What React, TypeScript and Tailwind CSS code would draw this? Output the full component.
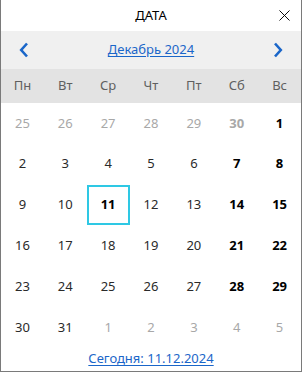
import { X } from "lucide-react";

type Day = { n: number; muted?: boolean; bold?: boolean; today?: boolean };

const weekdays = ["Пн", "Вт", "Ср", "Чт", "Пт", "Сб", "Вс"];

function buildDays(): Day[] {
  const days: Day[] = [];
  [25, 26, 27, 28, 29].forEach((n) => days.push({ n, muted: true }));
  days.push({ n: 30, muted: true, bold: true });
  for (let n = 1; n <= 31; n++) {
    const col = days.length % 7;
    days.push({ n, bold: col >= 5 || n === 11, today: n === 11 });
  }
  [1, 2, 3, 4, 5].forEach((n) => days.push({ n, muted: true }));
  return days;
}

function Chevron({ dir }: { dir: "left" | "right" }) {
  return (
    <svg width="12" height="18" viewBox="0 0 12 18" className="text-[#1a66c9]">
      {dir === "left" ? (
        <path d="M9 2.5 L3.2 9 L9 15.5" fill="none" stroke="currentColor" strokeWidth="2.6" />
      ) : (
        <path d="M3 2.5 L8.8 9 L3 15.5" fill="none" stroke="currentColor" strokeWidth="2.6" />
      )}
    </svg>
  );
}

export default function App() {
  const days = buildDays();
  return (
    <div
      className="flex h-[372px] w-[302px] flex-col border-x border-b border-[#7a7a7a] bg-white text-[13px]"
      style={{ fontFamily: '"Segoe UI", "Noto Sans", sans-serif' }}
    >
      <div className="relative flex h-[31px] shrink-0 items-center justify-center text-[13px] text-black">
        ДАТА
        <button type="button" className="absolute right-[7px] top-[6px] text-black" aria-label="Закрыть">
          <X className="h-[19px] w-[19px]" strokeWidth={1.2} />
        </button>
      </div>
      <div className="flex h-[38px] shrink-0 items-center justify-between bg-[#f0f0f0] px-[17px]">
        <Chevron dir="left" />
        <span className="text-[13px] text-[#1a66c9] underline underline-offset-2">Декабрь 2024</span>
        <Chevron dir="right" />
      </div>
      <div className="grid h-[34px] shrink-0 grid-cols-7 items-center bg-[#e3e3e3] text-[#5f5f5f]">
        {weekdays.map((w) => (
          <div key={w} className="text-center">
            {w}
          </div>
        ))}
      </div>
      <div className="grid h-[245px] shrink-0 grid-cols-7 grid-rows-6">
        {days.map((d, i) => (
          <div
            key={i}
            className={
              "flex items-center justify-center " +
              (d.today ? "border-2 border-[#2ec8e4] " : "") +
              (d.bold ? "font-bold " : "") +
              (d.muted ? "text-[#a8a8a8]" : d.bold ? "text-black" : "text-[#2a2a2a]")
            }
          >
            {d.n}
          </div>
        ))}
      </div>
      <div className="flex flex-1 items-start justify-center pt-[1px]">
        <span className="text-[13px] text-[#1a66c9] underline underline-offset-2">Сегодня: 11.12.2024</span>
      </div>
    </div>
  );
}
